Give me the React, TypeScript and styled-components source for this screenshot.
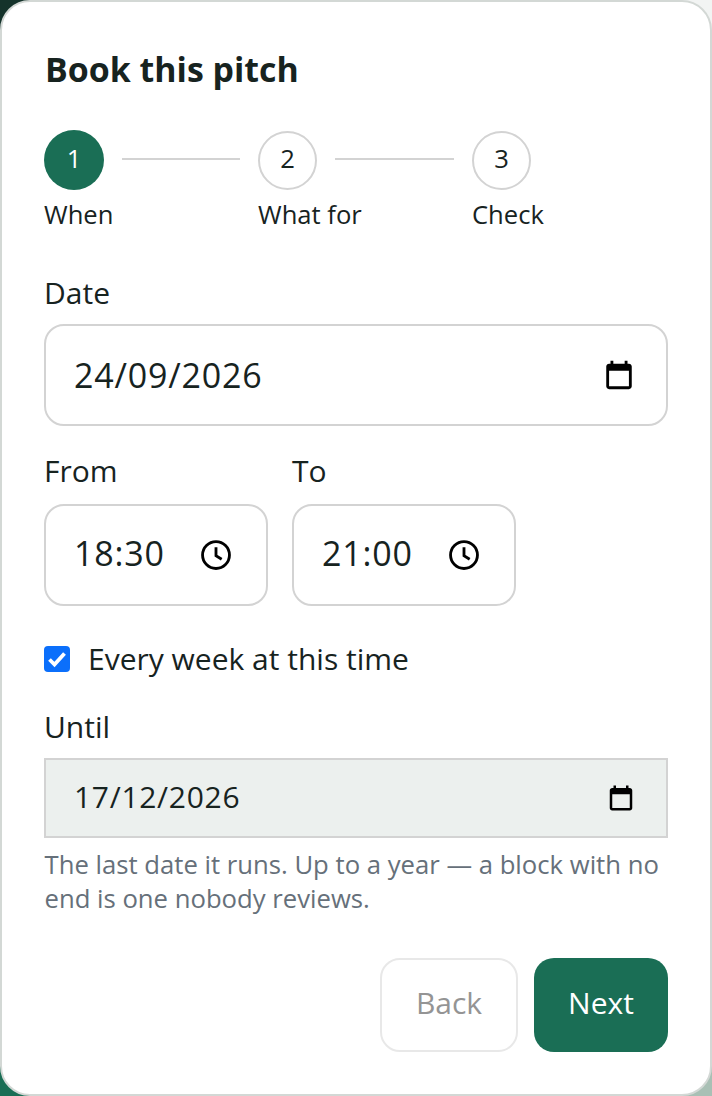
import React from "react";
import styled, { createGlobalStyle } from "styled-components";

const Global = createGlobalStyle`
  html, body { margin: 0; padding: 0; }
  html {
    background-color: #fff;
    background-repeat: no-repeat;
    background-image:
      linear-gradient(#15332b, #15332b),
      linear-gradient(#f2f4f3, #f2f4f3),
      linear-gradient(#1a6e55, #1a6e55),
      linear-gradient(#a9c0b5, #a9c0b5);
    background-size: 30px 30px;
    background-position: 0 0, 100% 0, 0 100%, 100% 100%;
  }
  * { box-sizing: border-box; }
  body { font-family: "Open Sans", "Liberation Sans", sans-serif; color: #17231f; }
`;

const Card = styled.div`
  width: 712px;
  height: 1096px;
  overflow: hidden;
  background: #fff;
  border: 2px solid #d3d8d5;
  border-radius: 30px;
  padding: 47px 42px 0;
`;

const Title = styled.h1`
  margin: 0 0 0 1px;
  font-size: 33.9px;
  line-height: 40px;
  font-weight: 700;
  color: #17231f;
`;

const Steps = styled.div`
  display: grid;
  grid-template-columns: 214px 214px auto;
  margin-top: 41px;
`;

const Step = styled.div`
  display: flex;
  flex-direction: column;
`;

const StepTop = styled.div`
  display: flex;
  align-items: center;
  height: 60px;
`;

const Circle = styled.div<{ $active?: boolean }>`
  width: ${(p) => (p.$active ? 60 : 59)}px;
  height: ${(p) => (p.$active ? 60 : 59)}px;
  flex: none;
  border-radius: 50%;
  display: flex;
  align-items: center;
  justify-content: center;
  font-size: 25.6px;
  padding-bottom: 3px;
  background: ${(p) => (p.$active ? "#1a6e55" : "#fff")};
  color: ${(p) => (p.$active ? "#fff" : "#17231f")};
  border: ${(p) => (p.$active ? "none" : "2px solid #d3d3d3")};
`;

const Line = styled.div`
  height: 2px;
  flex: 1;
  margin: -3px 18px 0 17.5px;
  background: #d3d3d3;
`;

const StepLabel = styled.div`
  font-size: 25.6px;
  line-height: 36px;
  margin-top: 7px;
`;

const Label = styled.div`
  font-size: 30px;
  line-height: 38px;
`;

const Field = styled.div<{ $top: number }>`
  margin-top: ${(p) => p.$top}px;
  display: flex;
  flex-direction: column;
`;

const Input = styled.div<{ $w?: number; $h: number; $gap: number; $right: number }>`
  width: ${(p) => (p.$w ? `${p.$w}px` : "100%")};
  height: ${(p) => p.$h}px;
  margin-top: ${(p) => p.$gap}px;
  border: 2px solid #d3d3d3;
  border-radius: 20px;
  background: #fff;
  display: flex;
  align-items: center;
  justify-content: space-between;
  font-size: 34px;
  letter-spacing: 0.8px;
  padding: 0 ${(p) => p.$right}px 0 28px;
  color: #17231f;
`;

const DisabledInput = styled(Input)`
  border-radius: 0;
  background: #ecf0ee;
  font-size: 30px;
  letter-spacing: 0.7px;
`;

const Value = styled.span<{ $lift?: boolean }>`
  padding-bottom: ${(p) => (p.$lift ? 4 : 0)}px;
`;

const TimeRow = styled.div`
  display: flex;
  gap: 24px;
  margin-top: 26px;
`;

const CheckRow = styled.div`
  display: flex;
  align-items: center;
  gap: 18px;
  margin-top: 34px;
  font-size: 30px;
  line-height: 38px;
`;

const Check = styled.div`
  width: 26px;
  height: 26px;
  border-radius: 4px;
  background: #0b6ffb;
  display: flex;
  align-items: center;
  justify-content: center;
`;

const Help = styled.p`
  margin: 10px 0 0 0.5px;
  font-size: 25.68px;
  line-height: 34px;
  color: #66707a;
`;

const Actions = styled.div`
  display: flex;
  justify-content: flex-end;
  gap: 16px;
  margin-top: 42px;
`;

const Button = styled.button<{ $primary?: boolean }>`
  height: 94px;
  width: ${(p) => (p.$primary ? 134 : 138)}px;
  border-radius: 20px;
  font-family: inherit;
  font-size: 30px;
  padding: 0 0 5px;
  background: ${(p) => (p.$primary ? "#1a6e55" : "#fff")};
  color: ${(p) => (p.$primary ? "#fff" : "#949494")};
  border: ${(p) => (p.$primary ? "none" : "2px solid #e8e8e8")};
`;

const CalendarIcon = ({ size }: { size: number }) => (
  <svg width={size} height={size} viewBox="0 0 24 24" fill="#000">
    <path d="M19 4h-1V2h-2v2H8V2H6v2H5c-1.100 0-2 .9-2 2v14c0 1.100.9 2 2 2h14c1.100 0 2-.9 2-2V6c0-1.100-.9-2-2-2zm0 16H5V9h14v11z" />
  </svg>
);

const ClockIcon = () => (
  <svg width="34" height="34" viewBox="0 0 24 24" fill="none" stroke="#000" strokeWidth="2">
    <circle cx="12" cy="12" r="9.5" />
    <path d="M12 6.500V12.500L16 15" />
  </svg>
);

export default function App() {
  return (
    <>
      <Global />
      <Card>
        <Title>Book this pitch</Title>
        <Steps>
          <Step>
            <StepTop>
              <Circle $active>1</Circle>
              <Line />
            </StepTop>
            <StepLabel>When</StepLabel>
          </Step>
          <Step>
            <StepTop>
              <Circle>2</Circle>
              <Line />
            </StepTop>
            <StepLabel>What for</StepLabel>
          </Step>
          <Step>
            <StepTop>
              <Circle>3</Circle>
            </StepTop>
            <StepLabel>Check</StepLabel>
          </Step>
        </Steps>
        <Field $top={41}>
          <Label>Date</Label>
          <Input $h={102} $gap={12} $right={30}>
            <Value>24/09/2026</Value>
            <CalendarIcon size={34} />
          </Input>
        </Field>
        <TimeRow>
          <Field $top={0}>
            <Label>From</Label>
            <Input $w={224} $h={102} $gap={14} $right={33}>
              <Value $lift>18:30</Value>
              <ClockIcon />
            </Input>
          </Field>
          <Field $top={0}>
            <Label>To</Label>
            <Input $w={224} $h={102} $gap={14} $right={33}>
              <Value $lift>21:00</Value>
              <ClockIcon />
            </Input>
          </Field>
        </TimeRow>
        <CheckRow>
          <Check>
            <svg width="20" height="20" viewBox="0 0 20 20" fill="none" stroke="#fff" strokeWidth="3.8">
              <path d="M2.500 10.500L7.500 15.500L17.500 4.500" />
            </svg>
          </Check>
          Every week at this time
        </CheckRow>
        <Field $top={30}>
          <Label>Until</Label>
          <DisabledInput $h={80} $gap={12} $right={30}>
            <Value $lift>17/12/2026</Value>
            <CalendarIcon size={30} />
          </DisabledInput>
        </Field>
        <Help>The last date it runs. Up to a year — a block with no end is one nobody reviews.</Help>
        <Actions>
          <Button>Back</Button>
          <Button $primary>Next</Button>
        </Actions>
      </Card>
    </>
  );
}
